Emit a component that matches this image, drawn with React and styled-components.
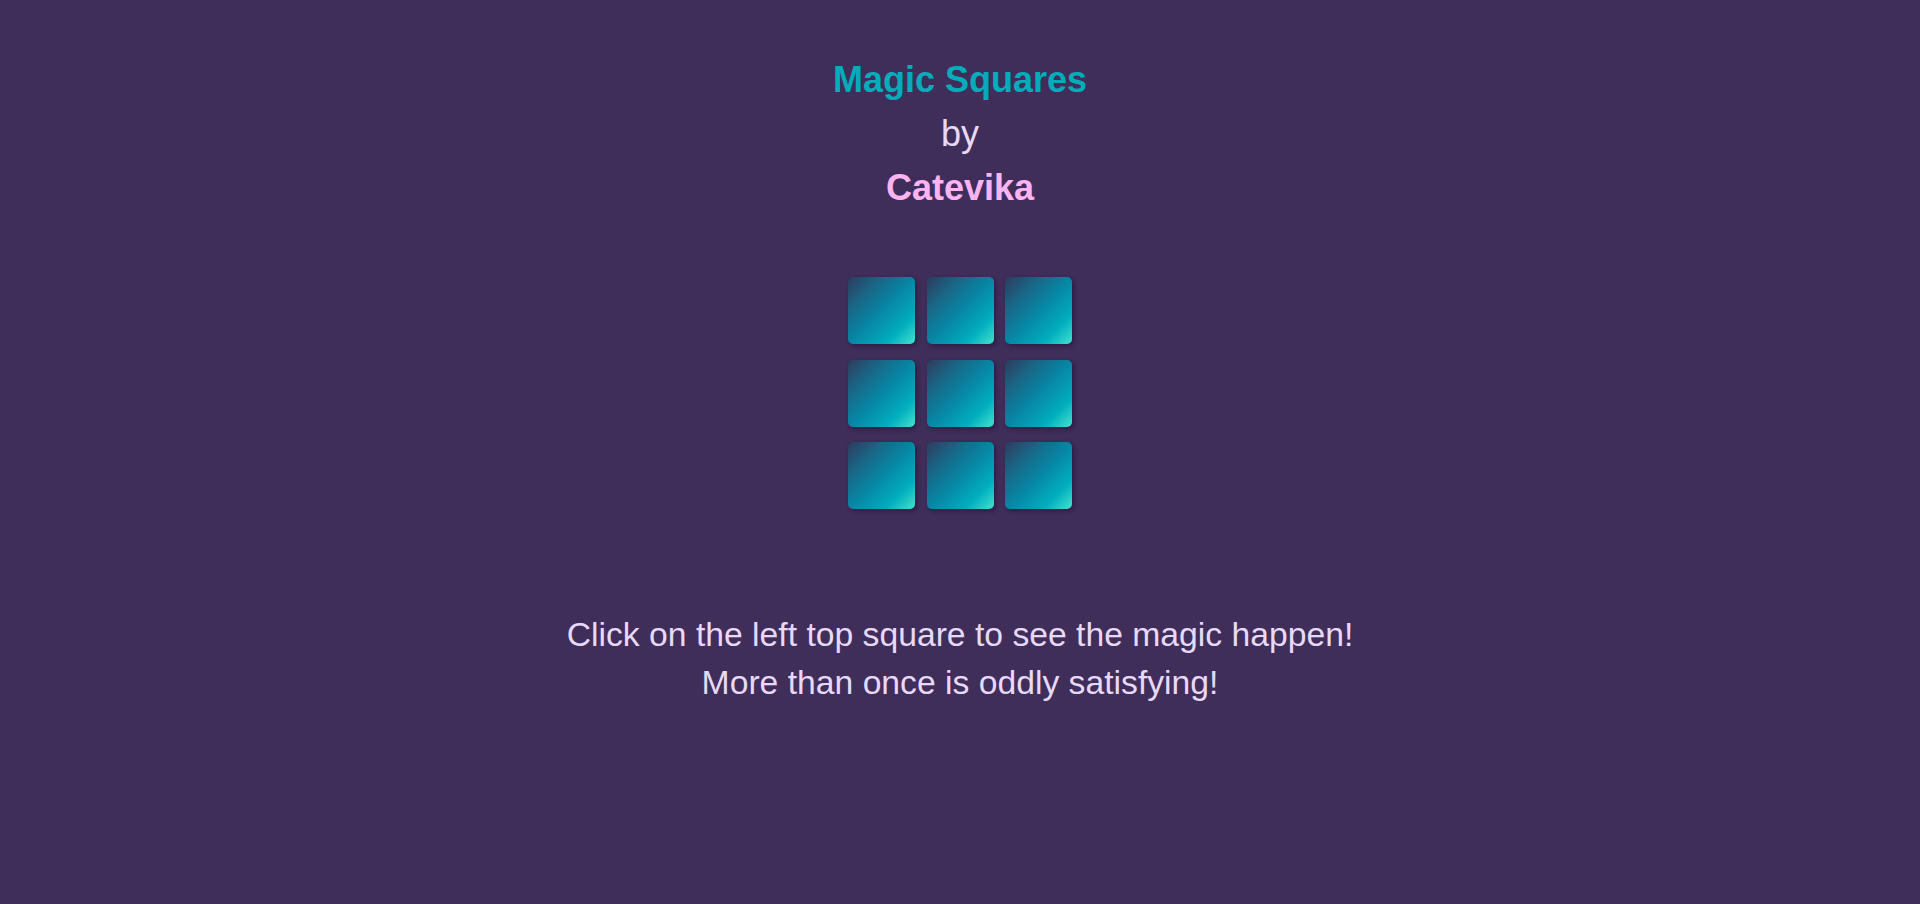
import React from 'react';
import styled, { createGlobalStyle } from 'styled-components';

const GlobalStyle = createGlobalStyle`
  html, body {
    margin: 0;
    padding: 0;
    background: #3f2d5a;
    font-family: "Liberation Sans", Arial, sans-serif;
  }
`;

const Page = styled.div`
  min-height: 904px;
  display: flex;
  flex-direction: column;
  align-items: center;
  padding-top: 53px;
  box-sizing: border-box;
  background: #3f2d5a;
  text-align: center;
`;

const Heading = styled.div`
  font-size: 36px;
  line-height: 54px;
  font-weight: ${p => (p.$bold ? 700 : 400)};
  color: ${p => p.$color};
`;

const Grid = styled.div`
  display: grid;
  grid-template-columns: repeat(3, 67px);
  grid-auto-rows: 67px;
  column-gap: 11.5px;
  row-gap: 15.5px;
  margin-top: 62px;
`;

const Square = styled.div`
  border-radius: 5px;
  background: linear-gradient(135deg, #2f3a5e 0%, #1a6585 25%, #0786a4 50%, #00aebe 78%, #45e3cd 100%);
  box-shadow: 2px 2px 4px rgba(20, 10, 40, 0.45);
  cursor: pointer;
`;

const Hint = styled.p`
  margin: 101px 0 0;
  font-size: 33.7px;
  line-height: 48px;
  color: #e8d9f6;
`;

const App = () => {
  return (
    <>
      <GlobalStyle />
      <Page>
        <Heading $bold $color="#00adb9">Magic Squares</Heading>
        <Heading $color="#e8d9f6">by</Heading>
        <Heading $bold $color="#ffb4f2">Catevika</Heading>
        <Grid>
          {Array.from({ length: 9 }).map((_, i) => (
            <Square key={i} />
          ))}
        </Grid>
        <Hint>
          Click on the left top square to see the magic happen!
          <br />
          More than once is oddly satisfying!
        </Hint>
      </Page>
    </>
  );
};

export default App;
